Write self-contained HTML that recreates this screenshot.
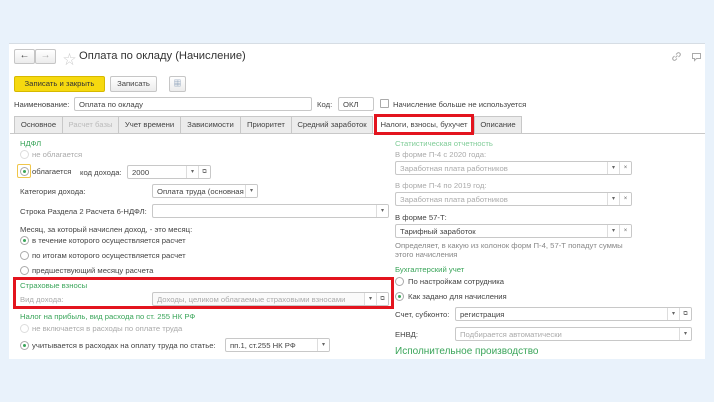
<!DOCTYPE html>
<html><head><meta charset="utf-8"><style>
*{margin:0;padding:0;box-sizing:border-box}
body{width:714px;height:402px;background:#e9f2fb;font-family:"Liberation Sans","Noto Sans CJK SC",sans-serif;font-size:7.7px;color:#444;position:relative;overflow:hidden}
.p{position:absolute;left:9px;top:43px;width:696px;height:316px;background:#fff;border-top:1px solid #d6dde4}
.a{position:absolute;white-space:nowrap}
.in{position:absolute;border:1px solid #c8c8c8;border-radius:2px;background:#fff;height:14px;padding:2px 4px;line-height:9px;white-space:nowrap;overflow:hidden}
.dis{color:#aaa}
.g{color:#3aa55a}
.gl{color:#7fcc97}
.btn{position:absolute;border:1px solid #c6c6c6;border-radius:2px;background:linear-gradient(#fff,#ececec);text-align:center;line-height:13px;white-space:nowrap}
.rd{position:absolute;width:9px;height:9px;border:1px solid #aaa;border-radius:50%;background:#fff}
.rd.on::after{content:"";position:absolute;left:2px;top:2px;width:3px;height:3px;border-radius:50%;background:#3aa55a}
.sb{position:absolute;top:0;width:12px;height:12px;border-left:1px solid #ddd;text-align:center;font-size:6px;line-height:12px;color:#666;background:#fff}
.tab{position:absolute;top:116px;height:18px;border:1px solid #c8c8c8;background:#ececec;line-height:16px;text-align:center;white-space:nowrap}
</style></head><body>
<div class="p"></div>
<div class="btn" style="left:14px;top:49px;width:21px;height:15px;font-size:10px;line-height:12px">&#8592;</div>
<div class="btn" style="left:35px;top:49px;width:21px;height:15px;font-size:10px;line-height:12px;color:#aaa">&#8594;</div>
<div class="a" style="left:63px;top:49px;font-size:13px;color:#ccc">&#9734;</div>
<div class="a" style="left:79px;top:50px;font-size:11.2px;color:#333">Оплата по окладу (Начисление)</div>
<svg class="a" style="left:671px;top:51px" width="11" height="11" viewBox="0 0 11 11" fill="none" stroke="#aaa" stroke-width="1"><path d="M4.5 6.5l2-2M3.5 5L2 6.5a1.8 1.8 0 002.5 2.5L6 7.5M5 3.5L6.5 2A1.8 1.8 0 019 4.5L7.5 6"/></svg>
<svg class="a" style="left:691px;top:51px" width="11" height="11" viewBox="0 0 11 11" fill="none" stroke="#aaa" stroke-width="1"><path d="M1.5 2.5h8v5h-4l-2 2v-2h-2z"/></svg>
<div class="btn" style="left:14px;top:76px;width:91px;height:16px;background:#f6d90f;border-color:#d6b900;color:#333">Записать и закрыть</div>
<div class="btn" style="left:110px;top:76px;width:47px;height:16px">Записать</div>
<div class="btn" style="left:169px;top:76px;width:17px;height:16px;color:#6b86a6">&#9638;</div>
<div class="a" style="left:14px;top:100px">Наименование:</div>
<div class="in" style="left:74px;top:97px;width:238px">Оплата по окладу</div>
<div class="a" style="left:317px;top:100px">Код:</div>
<div class="in" style="left:338px;top:97px;width:36px">ОКЛ</div>
<div class="a" style="left:380px;top:99px;width:9px;height:9px;border:1px solid #aaa;border-radius:1px"></div>
<div class="a" style="left:393px;top:100px">Начисление больше не используется</div>
<div style="position:absolute;left:10px;top:133px;width:695px;border-top:1px solid #c8c8c8"></div>
<div class="tab" style="left:14px;width:49px">Основное</div>
<div class="tab" style="left:62px;width:57px;color:#bbb">Расчет базы</div>
<div class="tab" style="left:118px;width:63px">Учет времени</div>
<div class="tab" style="left:180px;width:61px">Зависимости</div>
<div class="tab" style="left:240px;width:52px">Приоритет</div>
<div class="tab" style="left:291px;width:82px">Средний заработок</div>
<div class="tab" style="left:374px;width:100px;background:#fff;border:3px solid #e3141e;top:114px;height:21px;line-height:15px">Налоги, взносы, бухучет</div>
<div class="tab" style="left:474px;width:48px">Описание</div>

<div class="a g" style="left:20px;top:139px">НДФЛ</div>
<div class="rd" style="left:20px;top:150px;border-color:#ddd"></div>
<div class="a dis" style="left:32px;top:150px">не облагается</div>
<div class="a" style="left:17px;top:164px;width:14px;height:14px;border:1px solid #f0c64a;border-radius:2px"></div>
<div class="rd on" style="left:19.5px;top:166.5px"></div>
<div class="a" style="left:32px;top:167px">облагается</div>
<div class="a" style="left:80px;top:168px">код дохода:</div>
<div class="in" style="left:127px;top:165px;width:84px">2000<span class="sb" style="right:12px">&#9662;</span><span class="sb" style="right:0">&#10697;</span></div>
<div class="a" style="left:20px;top:187px">Категория дохода:</div>
<div class="in" style="left:152px;top:184px;width:106px">Оплата труда (основная<span class="sb" style="right:0">&#9662;</span></div>
<div class="a" style="left:20px;top:207px">Строка Раздела 2 Расчета 6-НДФЛ:</div>
<div class="in" style="left:152px;top:204px;width:237px"><span class="sb" style="right:0">&#9662;</span></div>
<div class="a" style="left:20px;top:225px">Месяц, за который начислен доход, - это месяц:</div>
<div class="rd on" style="left:20px;top:236px"></div><div class="a" style="left:32px;top:236px">в течение которого осуществляется расчет</div>
<div class="rd" style="left:20px;top:251px"></div><div class="a" style="left:32px;top:251px">по итогам которого осуществляется расчет</div>
<div class="rd" style="left:20px;top:266px"></div><div class="a" style="left:32px;top:266px">предшествующий месяцу расчета</div>
<div class="a" style="left:13px;top:277px;width:381px;height:32px;border:3px solid #e3141e"></div>
<div class="a g" style="left:20px;top:281px">Страховые взносы</div>
<div class="a dis" style="left:20px;top:295px">Вид дохода:</div>
<div class="in dis" style="left:152px;top:292px;width:237px;background:#fafafa">Доходы, целиком облагаемые страховыми взносами<span class="sb" style="right:12px">&#9662;</span><span class="sb" style="right:0">&#10697;</span></div>
<div class="a g" style="left:20px;top:312px">Налог на прибыль, вид расхода по ст. 255 НК РФ</div>
<div class="rd" style="left:20px;top:324px;border-color:#ddd"></div><div class="a dis" style="left:32px;top:324px">не включается в расходы по оплате труда</div>
<div class="rd on" style="left:20px;top:341px"></div><div class="a" style="left:32px;top:341px">учитывается в расходах на оплату труда по статье:</div>
<div class="in" style="left:225px;top:338px;width:105px">пп.1, ст.255 НК РФ<span class="sb" style="right:0">&#9662;</span></div>

<div class="a gl" style="left:395px;top:139px">Статистическая отчетность</div>
<div class="a dis" style="left:395px;top:150px">В форме П-4 с 2020 года:</div>
<div class="in dis" style="left:395px;top:161px;width:237px">Заработная плата работников<span class="sb" style="right:12px">&#9662;</span><span class="sb" style="right:0">&#215;</span></div>
<div class="a dis" style="left:395px;top:181px">В форме П-4 по 2019 год:</div>
<div class="in dis" style="left:395px;top:192px;width:237px">Заработная плата работников<span class="sb" style="right:12px">&#9662;</span><span class="sb" style="right:0">&#215;</span></div>
<div class="a" style="left:395px;top:213px">В форме 57-Т:</div>
<div class="in" style="left:395px;top:224px;width:237px">Тарифный заработок<span class="sb" style="right:12px">&#9662;</span><span class="sb" style="right:0">&#215;</span></div>
<div class="a" style="left:395px;top:241px;color:#888;line-height:9px">Определяет, в какую из колонок форм П-4, 57-Т попадут суммы<br>этого начисления</div>
<div class="a g" style="left:395px;top:265px">Бухгалтерский учет</div>
<div class="rd" style="left:395px;top:277px"></div><div class="a" style="left:408px;top:277px">По настройкам сотрудника</div>
<div class="rd on" style="left:395px;top:292px"></div><div class="a" style="left:408px;top:292px">Как задано для начисления</div>
<div class="a" style="left:395px;top:310px">Счет, субконто:</div>
<div class="in" style="left:455px;top:307px;width:237px">регистрация<span class="sb" style="right:12px">&#9662;</span><span class="sb" style="right:0">&#10697;</span></div>
<div class="a" style="left:395px;top:330px">ЕНВД:</div>
<div class="in dis" style="left:455px;top:327px;width:237px">Подбирается автоматически<span class="sb" style="right:0">&#9662;</span></div>
<div class="a g" style="left:395px;top:346px;font-size:10px;height:12px;overflow:hidden">Исполнительное производство</div>
</body></html>
